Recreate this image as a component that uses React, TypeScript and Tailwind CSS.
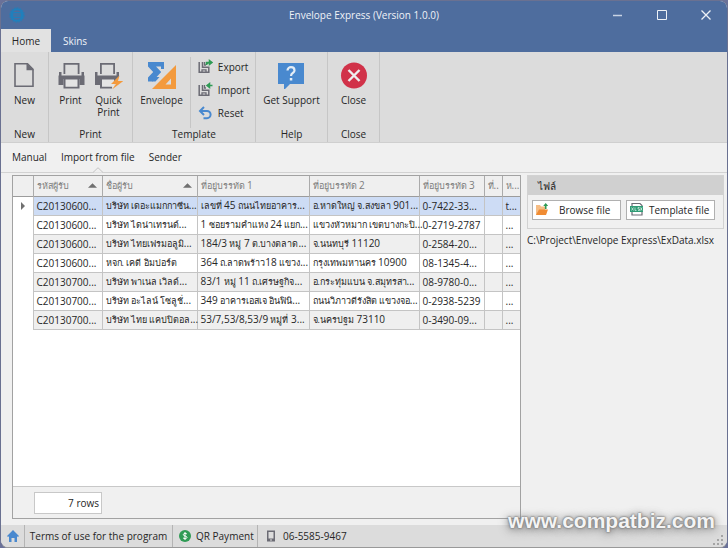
import type { ReactNode } from 'react';

type Row = {
  code: string;
  name: string;
  address1: string;
  address2: string;
  address3: string;
  note: string;
};

const rows: Row[] = [
  { code: 'C20130600...', name: 'บริษัท เดอะแมกกาซีน...', address1: 'เลขที่ 45 ถนนไทยอาคาร...', address2: 'อ.หาดใหญ่ จ.สงขลา 901...', address3: '0-7422-33...', note: 't...' },
  { code: 'C20130600...', name: 'บริษัท ไดน่าเทรนด์...', address1: '1 ซอยรามคำแหง 24 แยก...', address2: 'แขวงหัวหมาก เขตบางกะปิ...', address3: '0-2719-2787', note: '...' },
  { code: 'C20130600...', name: 'บริษัท ไทยเฟรมอลูมิ...', address1: '184/3 หมู่ 7 ต.บางตลาด...', address2: 'จ.นนทบุรี 11120', address3: '0-2584-20...', note: '...' },
  { code: 'C20130600...', name: 'หจก. เคดี อิมปอร์ต', address1: '364 ถ.ลาดพร้าว18 แขวง...', address2: 'กรุงเทพมหานคร 10900', address3: '08-1345-4...', note: '...' },
  { code: 'C20130700...', name: 'บริษัท พาเนล เวิลด์...', address1: '83/1 หมู่ 11 ถ.เศรษฐกิจ...', address2: 'อ.กระทุ่มแบน จ.สมุทรสา...', address3: '08-9780-0...', note: '...' },
  { code: 'C20130700...', name: 'บริษัท อะไลน์ โซลูชั่...', address1: '349 อาคารเอสเจ อินฟินิ...', address2: 'ถนนวิภาวดีรังสิต แขวงจอ...', address3: '0-2938-5239', note: '...' },
  { code: 'C20130700...', name: 'บริษัท ไทย แคปปิตอล...', address1: '53/7,53/8,53/9 หมู่ที่ 3...', address2: 'จ.นครปฐม 73110', address3: '0-3490-09...', note: '...' },
];

const columns = [
  { title: 'รหัสผู้รับ', sorted: true },
  { title: 'ชื่อผู้รับ', sorted: true },
  { title: 'ที่อยู่บรรทัด 1', sorted: false },
  { title: 'ที่อยู่บรรทัด 2', sorted: false },
  { title: 'ที่อยู่บรรทัด 3', sorted: false },
  { title: 'ที่..', sorted: false },
  { title: 'ห...', sorted: false },
];

// Thai script is set one step smaller than the Latin digits around it.
function MixedText({ text }: { text: string }) {
  return (
    <span className="whitespace-pre">
      {text.split(/([\u0E00-\u0E7F. ]*[\u0E00-\u0E7F])/).map((part, index) =>
        index % 2 === 1 ? (
          <span key={index} className="text-[9px]">
            {part}
          </span>
        ) : (
          part
        ),
      )}
    </span>
  );
}

function AppIcon() {
  return (
    <svg className="h-4 w-4" viewBox="0 0 16 16" fill="none" stroke="#1f80bd">
      <circle cx="8" cy="8" r="5.8" strokeWidth="2" />
      <circle cx="8" cy="8" r="7.2" strokeWidth="1" strokeDasharray="1.6 1.2" />
      <rect x="3.500" y="5.500" width="9" height="5" rx="1" strokeWidth="1.2" fill="#3f74a8" />
    </svg>
  );
}

function NewIcon() {
  return (
    <svg className="h-7 w-7" viewBox="0 0 28 28" fill="none">
      <path d="M4 2.8h12.500l5.500 5.500v16.900H4z" stroke="#6b6b74" strokeWidth="1.6" />
      <path d="M15.500 2v7.300h7.300z" fill="#6b6b74" />
    </svg>
  );
}

function PrintIcon() {
  return (
    <svg className="h-7 w-7" viewBox="0 0 28 28">
      <path d="M6.500 2h16v11h-1.800V3.800H8.300V13H6.500z" fill="#6b6b74" />
      <path d="M2 11h2.500v3.500h20V11H27v3l.5 1v9h-5v-6h-16v6h-5v-9l.5-1z" fill="#6b6b74" />
      <path d="M6.500 17h16v10.500h-16z" fill="#6b6b74" />
      <path d="M8.500 18.500h12v7.300h-12z" fill="#e4e4e4" />
    </svg>
  );
}

function QuickPrintIcon() {
  return (
    <svg className="h-7 w-7" viewBox="0 0 28 28">
      <path d="M5 2h15v11h-1.800V3.800H6.800V13H5z" fill="#6b6b74" />
      <path d="M0 11h2.500v3.500h19V11H24v4.500L17 22.500V18H6v6H0z" fill="#6b6b74" />
      <path d="M5 18h12v9.500H5z" fill="#6b6b74" />
      <path d="M7 18.500h12v9.500l-1-2.200H7z" fill="#e4e4e4" />
      <path d="M24.500 14.500L16 23h5l-4 5.500L28.500 20H23z" fill="#f39a3d" />
    </svg>
  );
}

function EnvelopeIcon() {
  return (
    <svg className="h-7 w-7" viewBox="0 0 28 28">
      <path d="M0 1h16v7h-3V5.500H8L13.200 11 4.500 20.500H0v-4L5.200 11 0 5.500z" fill="#4989cf" />
      <path d="M5 16h6.500l-4 4.500H4z" fill="#4989cf" />
      <path d="M28 4v24H4zM23 17.500L17.500 23.500H23z" fill="#f39a3d" fillRule="evenodd" />
    </svg>
  );
}

function SupportIcon() {
  return (
    <svg className="h-7 w-7" viewBox="0 0 28 28">
      <path d="M1 2h26v21H13l-6 6v-6H1z" fill="#4989cf" />
      <path d="M10.500 9.500c0-4.500 7-4.500 7 0 0 2.500-3.500 2.500-3.500 5.500" fill="none" stroke="#e4edf6" strokeWidth="2.200" />
      <path d="M12.800 17h2.500v2.500h-2.500z" fill="#e4edf6" />
    </svg>
  );
}

function CloseIcon() {
  return (
    <svg className="h-7 w-7" viewBox="0 0 28 28">
      <circle cx="14" cy="14.500" r="13" fill="#d13249" />
      <path d="M8.500 9l11 11M19.500 9l-11 11" stroke="#eee" strokeWidth="2.400" />
    </svg>
  );
}

function TransferIcon({ incoming }: { incoming?: boolean }) {
  return (
    <svg className="h-4 w-4" viewBox="0 0 16 16" fill="none">
      <path d="M1.200 3v10.300h9.600V8.200H4.500V3" stroke="#6b6b74" strokeWidth="1.500" />
      <path d="M4 13v-2.200h4V13M6.500 3v3H8" stroke="#6b6b74" strokeWidth="1.300" />
      {incoming ? (
        <path d="M14.500 3.500H10M11.500 1.500L9 3.500l2.500 2z" stroke="#2f9b55" strokeWidth="1.500" fill="#2f9b55" />
      ) : (
        <path d="M8.500 6V3.500H12M11.500 1.500l2.500 2-2.500 2z" stroke="#2f9b55" strokeWidth="1.500" fill="#2f9b55" />
      )}
    </svg>
  );
}

function ResetIcon() {
  return (
    <svg className="h-4 w-4" viewBox="0 0 16 16" fill="none" stroke="#4989cf" strokeWidth="2">
      <path d="M2.500 6H9a3.600 3.600 0 0 1 0 7.200H5.500" />
      <path d="M6 2L2 6l4 4" />
    </svg>
  );
}

function BrowseIcon() {
  return (
    <svg className="h-4 w-4" viewBox="0 0 16 16">
      <path d="M1 3h4l1 1.500h4V9H4l-2 4H1z" fill="#f6bd85" />
      <path d="M4 7.500h9l-2 5.500H1z" fill="#f08c33" />
      <path d="M9.900 7V4H8.200l2.500-3 2.500 3h-1.700v3z" fill="#2f9b55" />
    </svg>
  );
}

function SheetIcon() {
  return (
    <svg className="h-4 w-4" viewBox="0 0 16 16" fill="none">
      <path d="M3 4V1.500h8l2 2V4M3 10v3h10v-3" stroke="#6b6b74" strokeWidth="1.200" />
      <rect x="1" y="4" width="13" height="6" fill="#2f9b75" />
      <path d="M2.500 5.500l2 3M4.500 5.500l-2 3M6 5.500v3h1.500M10.500 5.500H9V7h1.500v1.500H9M11.500 5.500l1.500 3M13 5.500l-1.500 3" stroke="#dff2ea" strokeWidth=".7" />
    </svg>
  );
}

type RibbonGroupProps = {
  title: string;
  className: string;
  children: ReactNode;
};

function RibbonGroup({ title, className, children }: RibbonGroupProps) {
  return (
    <section className={`flex shrink-0 flex-col border-r border-[#c6c6c6] ${className}`}>
      <div className="flex flex-1 justify-center pt-[9px]">{children}</div>
      <h2 className="pb-[2px] text-center leading-3">{title}</h2>
    </section>
  );
}

function BigButton({ icon, label }: { icon: ReactNode; label: string }) {
  return (
    <button className="flex flex-col items-center gap-[5px] px-1 hover:bg-black/5">
      {icon}
      <span className="leading-3">{label}</span>
    </button>
  );
}

function SmallButton({ icon, label }: { icon: ReactNode; label: string }) {
  return (
    <button className="flex h-4 items-center gap-1 hover:bg-black/5">
      {icon}
      {label}
    </button>
  );
}

function RecipientTable() {
  return (
    <table className="w-full table-fixed border-collapse whitespace-nowrap text-left">
      <colgroup>
        <col className="w-5" />
        <col className="w-[69px]" />
        <col className="w-[95px]" />
        <col className="w-[112px]" />
        <col className="w-[110px]" />
        <col className="w-[65px]" />
        <col className="w-[18px]" />
        <col className="w-[18px]" />
      </colgroup>
      <thead>
        <tr className="h-5 border-b border-[#9c9c9c] bg-[#efefef] text-[#7d7d7d]">
          <th className="border-r border-[#ababab]" aria-label="Current row" />
          {columns.map((column) => (
            <th key={column.title} className="border-r border-[#ababab] p-0 pl-[3px] font-normal last:border-r-0">
              <div className="flex items-center justify-between pr-[5px]">
                <MixedText text={column.title} />
                {column.sorted && (
                  <svg className="h-[5px] w-[9px] shrink-0" viewBox="0 0 8 4" fill="#707070">
                    <path d="M4 0l4 4H0z" />
                  </svg>
                )}
              </div>
            </th>
          ))}
        </tr>
      </thead>
      <tbody>
        {rows.map((row, index) => (
          <tr key={index} className={`h-[19px] ${index === 0 ? 'bg-[#cddcf5]' : index % 2 === 0 ? 'bg-[#efefef]' : 'bg-white'}`}>
            <td className="border-r border-[#c4c4c4] bg-white p-0">
              {index === 0 && (
                <svg className="mx-auto h-2 w-1" viewBox="0 0 4 8" fill="#707070">
                  <path d="M0 0l4 4-4 4z" />
                </svg>
              )}
            </td>
            {[row.code, row.name, row.address1, row.address2, row.address3, '', row.note].map((value, cell) => (
              <td key={cell} className="border-r border-b border-[#c4c4c4] p-0 pl-[3px] leading-4 last:border-r-0">
                <MixedText text={value} />
              </td>
            ))}
          </tr>
        ))}
      </tbody>
    </table>
  );
}

export default function App() {
  return (
    <div className="min-h-screen bg-[#6a7199] font-['Open_Sans','Noto_Sans',sans-serif] text-[10px] text-[#262626]">
      <div className="relative flex min-h-screen flex-col overflow-hidden rounded-lg border border-[#6a7191] border-b-[#999] bg-[#f0f0f0]">
        <header className="bg-[#4e6d9e] text-[#f0f3f8]">
          <div className="flex h-7 items-center pl-2">
            <AppIcon />
            <h1 className="flex-1 pl-[108px] text-center">Envelope Express (Version 1.0.0)</h1>
            <div className="flex">
              <button aria-label="Minimize" className="flex h-7 w-11 items-center justify-center">
                <svg className="h-3 w-3" viewBox="0 0 12 12" stroke="#c8d3e4"><path d="M2 6.500h9" strokeWidth="1.500" /></svg>
              </button>
              <button aria-label="Maximize" className="flex h-7 w-11 items-center justify-center">
                <svg className="h-3 w-3" viewBox="0 0 12 12" fill="none" stroke="#eef2f7"><path d="M2.500 1.500h9v9h-9z" /></svg>
              </button>
              <button aria-label="Close window" className="flex h-7 w-11 items-center justify-center">
                <svg className="h-3 w-3" viewBox="0 0 12 12" stroke="#eef2f7" strokeWidth="1.300"><path d="M2.500 1.500l9 9M11.500 1.500l-9 9" /></svg>
              </button>
            </div>
          </div>
          <nav className="flex h-[23px]">
            <button className="w-[50px] bg-[#e2e2e2] pt-[2px] text-[#262626]">Home</button>
            <button className="w-12 pt-[2px]">Skins</button>
          </nav>
        </header>

        <div className="flex h-[91px] border-b border-[#cfcfcf] bg-[#dcdcdc]">
          <RibbonGroup title="New" className="w-12">
            <BigButton icon={<NewIcon />} label="New" />
          </RibbonGroup>
          <RibbonGroup title="Print" className="w-[84px]">
            <BigButton icon={<PrintIcon />} label="Print" />
            <button className="flex w-10 flex-col items-center gap-[5px] hover:bg-black/5">
              <QuickPrintIcon />
              <span className="leading-3">Quick Print</span>
            </button>
          </RibbonGroup>
          <RibbonGroup title="Template" className="w-[123px]">
            <BigButton icon={<EnvelopeIcon />} label="Envelope" />
            <div className="-mt-1 mr-[2px] ml-[3px] flex flex-col gap-[7px] border-l border-[#c6c6c6] pt-[2px] pl-[7px]">
              <SmallButton icon={<TransferIcon />} label="Export" />
              <SmallButton icon={<TransferIcon incoming />} label="Import" />
              <SmallButton icon={<ResetIcon />} label="Reset" />
            </div>
          </RibbonGroup>
          <RibbonGroup title="Help" className="w-[72px]">
            <BigButton icon={<SupportIcon />} label="Get Support" />
          </RibbonGroup>
          <RibbonGroup title="Close" className="w-[52px]">
            <BigButton icon={<CloseIcon />} label="Close" />
          </RibbonGroup>
        </div>

        <nav className="flex h-[30px] items-center gap-[14px] border-b border-[#d2d2d2] pl-[11px]">
          <button>Manual</button>
          <button className="relative h-full">
            Import from file
            <svg className="absolute -bottom-px left-1/2 h-[6px] w-[10px] -translate-x-1/2" viewBox="0 0 10 6" fill="#f0f0f0" stroke="#c4c4c4">
              <path d="M0 5.500L5 .7l5 4.800" />
            </svg>
          </button>
          <button>Sender</button>
        </nav>

        <main className="flex flex-1 gap-[6px] pt-[2px] pr-[3px] pb-[6px] pl-[11px]">
          <section className="flex min-w-0 flex-1 flex-col border border-[#a2a2a2] bg-white">
            <div className="flex-1">
              <RecipientTable />
            </div>
            <div className="flex h-8 items-center border-t border-[#c8c8c8] bg-[#f0f0f0] pl-[21px]">
              <output className="h-[22px] w-[68px] border border-[#c8c8c8] bg-white pr-[2px] text-right leading-5">7 rows</output>
            </div>
          </section>

          <aside className="w-[197px] shrink-0">
            <fieldset className="border border-[#d2d2d2]">
              <h2 className="h-[19px] bg-[#d0d0d0] pl-[10px] leading-5 font-medium">ไฟล์</h2>
              <div className="flex gap-[5px] px-1 pt-[5px] pb-2">
                <button className="flex h-5 w-[89px] items-center gap-2 border border-[#b0b0b0] bg-white pl-[2px]">
                  <BrowseIcon />
                  Browse file
                </button>
                <button className="flex h-5 w-[89px] items-center gap-1 border border-[#b0b0b0] bg-white pl-[2px]">
                  <SheetIcon />
                  Template file
                </button>
              </div>
            </fieldset>
            <p className="pt-1">C:\Project\Envelope Express\ExData.xlsx</p>
          </aside>
        </main>

        <footer className="flex h-[22px] items-center bg-[#dcdcdc]">
          <a href="#home" aria-label="Home" className="flex h-full w-6 items-center justify-center border-r border-[#b4b4b4]">
            <svg className="h-3 w-3" viewBox="0 0 12 12" fill="#4989cf">
              <path d="M6 0l6 6-1 1-1-.8V12H7.500V8h-3v4H2V6.200L1 7 0 6z" />
            </svg>
          </a>
          <a href="#terms" className="flex h-full w-[148px] items-center justify-center border-r border-[#b4b4b4]">
            Terms of use for the program
          </a>
          <a href="#payment" className="flex h-full w-[85px] items-center gap-[5px] border-r border-[#b4b4b4] pl-[6px]">
            <svg className="h-3 w-3 shrink-0" viewBox="0 0 12 12" fill="none" stroke="#fff">
              <circle cx="6" cy="6" r="6" fill="#2f9b55" stroke="none" />
              <path d="M8 4.200C7.500 3 4.300 3 4.300 4.700 4.300 6.400 8 5.600 8 7.400 8 9 4.700 9 4 7.800M6 2v8" />
            </svg>
            QR Payment
          </a>
          <a href="tel:0655859467" className="flex h-full items-center gap-[6px] pl-[7px]">
            <svg className="h-3 w-3" viewBox="0 0 12 12" fill="#6b6b74">
              <path d="M2 .5h8v11H2zM3.500 2v6.500h5V2zM5 9.500v1h2v-1z" fillRule="evenodd" />
            </svg>
            06-5585-9467
          </a>
          <svg className="mt-2 mr-1 ml-auto h-[10px] w-[10px]" viewBox="0 0 10 10" fill="#a4a4a4">
            <path d="M8 0h2v2H8zM4 4h2v2H4zM8 4h2v2H8zM0 8h2v2H0zM4 8h2v2H4zM8 8h2v2H8z" />
          </svg>
        </footer>

        <p className="absolute right-3 bottom-[14px] font-['Liberation_Sans',sans-serif] text-[21px] leading-6 font-bold text-[#f4f4f4] [text-shadow:0_0_2px_#777,0_0_2px_#777,0_1px_7px_#777,0_2px_12px_#999]">
          www.compatbiz.com
        </p>
      </div>
    </div>
  );
}
